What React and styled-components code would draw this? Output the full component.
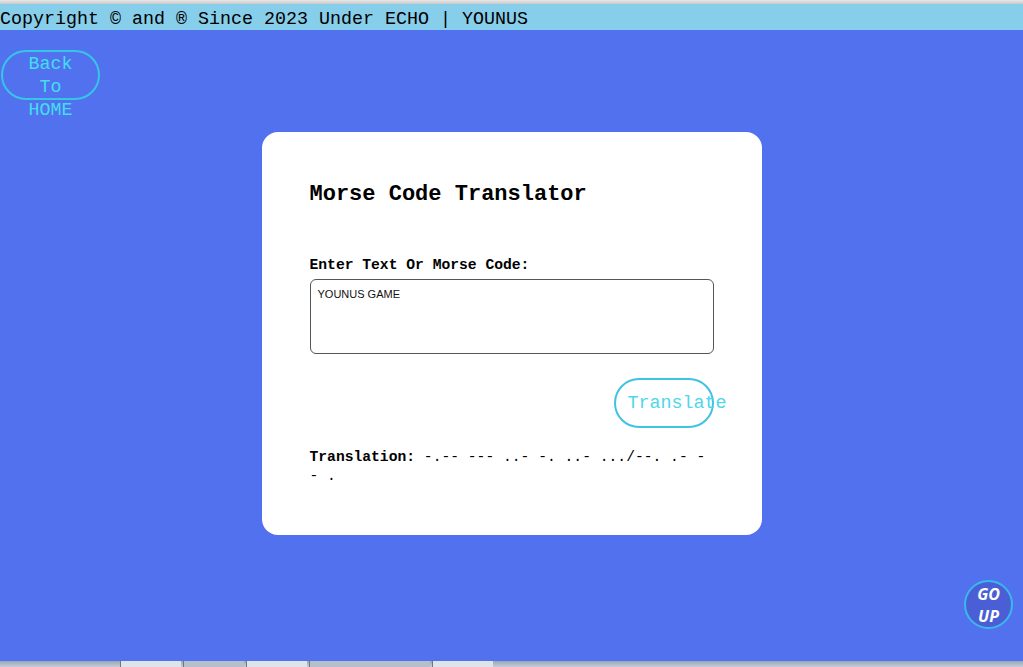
import React, { useState } from "react";
import styled, { createGlobalStyle } from "styled-components";

const Global = createGlobalStyle`
  html, body { margin: 0; padding: 0; }
  body {
    background: #5271ef;
    font-family: "Liberation Mono", "DejaVu Sans Mono", monospace;
    height: 667px;
    overflow: hidden;
  }
`;

const Page = styled.div`
  height: 667px;
  display: flex;
  flex-direction: column;
  position: relative;
`;

const Chrome = styled.div`
  height: 4px;
  background: linear-gradient(#e8e8e8, #c9c9c9);
`;

const Footer = styled.footer`
  height: 26px;
  box-sizing: border-box;
  padding-top: 5px;
  background: #87ceeb;
  color: #000;
  font-size: 18.33px;
  line-height: 21px;
  white-space: nowrap;
`;

const BackButton = styled.button`
  margin: 20px 0 0 1px;
  width: 99px;
  height: 50px;
  border: 2px solid #37c5e6;
  border-radius: 25px;
  background: transparent;
  color: #41dff0;
  font-family: "Liberation Mono", monospace;
  font-size: 18.33px;
  line-height: 23px;
  padding: 0 22px;
  display: flex;
  align-items: flex-start;
  justify-content: center;
  text-align: center;
  box-sizing: border-box;
  align-self: flex-start;
  cursor: pointer;
  span { display: block; margin-top: 1px; }
`;

const Card = styled.div`
  align-self: center;
  margin-top: 32px;
  width: 500px;
  height: 403px;
  box-sizing: border-box;
  background: #fff;
  border-radius: 16px;
  padding: 50px 48px 0 48px;
  display: flex;
  flex-direction: column;
`;

const Title = styled.h2`
  margin: 0;
  font-size: 22px;
  line-height: 26px;
  font-weight: bold;
  color: #000;
`;

const Label = styled.label`
  margin-top: 48px;
  font-size: 14.67px;
  line-height: 18px;
  font-weight: bold;
  color: #000;
`;

const Input = styled.textarea`
  margin-top: 5px;
  width: 404px;
  height: 75px;
  box-sizing: border-box;
  border: 1px solid #555;
  border-radius: 6px;
  padding: 8px 7px;
  font-family: "Liberation Sans", Arial, sans-serif;
  font-size: 11px;
  color: #111;
  resize: none;
  outline: none;
`;

const Row = styled.div`
  margin-top: 24px;
  display: flex;
  justify-content: flex-end;
`;

const TranslateButton = styled.button`
  width: 100px;
  height: 50px;
  box-sizing: border-box;
  border: 2px solid #3ec3e2;
  border-radius: 25px;
  background: transparent;
  color: #4fd6ea;
  font-family: "Liberation Mono", monospace;
  font-size: 18.33px;
  padding: 0 0 0 12px;
  text-align: left;
  white-space: nowrap;
  overflow: visible;
  cursor: pointer;
`;

const Result = styled.p`
  margin: 20px 0 0;
  width: 404px;
  font-size: 14.67px;
  line-height: 19px;
  color: #000;
  strong { font-weight: bold; }
`;

const GoUp = styled.button`
  position: absolute;
  right: 10px;
  bottom: 38px;
  width: 49px;
  height: 49px;
  border-radius: 50%;
  border: 2px solid #3bb8ea;
  background: #4a5fd6;
  color: #fff;
  font-family: "Open Sans", "Noto Sans", sans-serif;
  font-style: italic;
  font-weight: bold;
  font-size: 16px;
  line-height: 22px;
  padding: 0;
  text-align: center;
  cursor: pointer;
`;

const Taskbar = styled.div`
  margin-top: auto;
  height: 6px;
  background: linear-gradient(#9aa7b4, #c6ced6);
  display: flex;
  gap: 2px;
  padding-left: 120px;
`;

const TaskItem = styled.div`
  width: ${(p) => p.w}px;
  background: ${(p) => p.c};
  border-left: 1px solid #6b7886;
`;

const morse = {
  A: ".-", B: "-...", C: "-.-.", D: "-..", E: ".", F: "..-.", G: "--.", H: "....",
  I: "..", J: ".---", K: "-.-", L: ".-..", M: "--", N: "-.", O: "---", P: ".--.",
  Q: "--.-", R: ".-.", S: "...", T: "-", U: "..-", V: "...-", W: ".--", X: "-..-",
  Y: "-.--", Z: "--..",
};

const toMorse = (s) =>
  s.toUpperCase().split(" ").map((w) => w.split("").map((c) => morse[c] || "").join(" ")).join("/");

export default function App() {
  const [text, setText] = useState("YOUNUS GAME");
  const [out, setOut] = useState(toMorse("YOUNUS GAME"));
  return (
    <Page>
      <Global />
      <Chrome />
      <Footer>Copyright © and ® Since 2023 Under ECHO | YOUNUS</Footer>
      <BackButton><span>Back To HOME</span></BackButton>
      <Card>
        <Title>Morse Code Translator</Title>
        <Label htmlFor="in">Enter Text Or Morse Code:</Label>
        <Input id="in" value={text} onChange={(e) => setText(e.target.value)} spellCheck={false} />
        <Row>
          <TranslateButton onClick={() => setOut(toMorse(text))}>Translate</TranslateButton>
        </Row>
        <Result><strong>Translation:</strong> {out}</Result>
      </Card>
      <Taskbar>
        <TaskItem w={60} c="#dfe4ea" />
        <TaskItem w={60} c="#b6c0cb" />
        <TaskItem w={60} c="#dfe4ea" />
        <TaskItem w={120} c="#b6c0cb" />
        <TaskItem w={60} c="#dfe4ea" />
      </Taskbar>
      <GoUp>GO<br />UP</GoUp>
    </Page>
  );
}
